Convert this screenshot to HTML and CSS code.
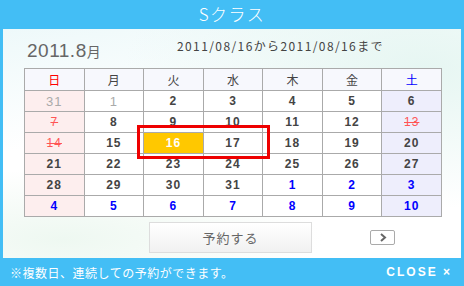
FILE: index.html
```html
<!DOCTYPE html>
<html lang="ja">
<head>
    <meta charset="UTF-8">
    <title>Sクラス</title>
    <link rel="stylesheet" href="styles.css">
</head>
<body>
    <div class="modal">
        <div class="modal-title">Sクラス</div>

        <div class="panel">
            <div class="top">
                <div class="month">2011.8<span class="month-unit">月</span></div>
                <div class="range">2011/08/16から2011/08/16まで</div>
            </div>

            <div class="cal-wrap">
                <table class="cal">
                    <thead>
                        <tr>
                            <th class="sun">日</th>
                            <th>月</th>
                            <th>火</th>
                            <th>水</th>
                            <th>木</th>
                            <th>金</th>
                            <th class="sat">土</th>
                        </tr>
                    </thead>
                    <tbody>
                        <tr>
                            <td class="sun-col other">31</td>
                            <td class="other">1</td>
                            <td>2</td>
                            <td>3</td>
                            <td>4</td>
                            <td>5</td>
                            <td class="sat-col">6</td>
                        </tr>
                        <tr>
                            <td class="sun-col closed">7</td>
                            <td>8</td>
                            <td>9</td>
                            <td>10</td>
                            <td>11</td>
                            <td>12</td>
                            <td class="sat-col closed">13</td>
                        </tr>
                        <tr>
                            <td class="sun-col closed">14</td>
                            <td>15</td>
                            <td class="picked">16</td>
                            <td>17</td>
                            <td>18</td>
                            <td>19</td>
                            <td class="sat-col">20</td>
                        </tr>
                        <tr>
                            <td class="sun-col">21</td>
                            <td>22</td>
                            <td>23</td>
                            <td>24</td>
                            <td>25</td>
                            <td>26</td>
                            <td class="sat-col">27</td>
                        </tr>
                        <tr>
                            <td class="sun-col">28</td>
                            <td>29</td>
                            <td>30</td>
                            <td>31</td>
                            <td class="next">1</td>
                            <td class="next">2</td>
                            <td class="sat-col next">3</td>
                        </tr>
                        <tr>
                            <td class="sun-col next">4</td>
                            <td class="next">5</td>
                            <td class="next">6</td>
                            <td class="next">7</td>
                            <td class="next">8</td>
                            <td class="next">9</td>
                            <td class="sat-col next">10</td>
                        </tr>
                    </tbody>
                </table>
                <!-- 選択範囲の枠 -->
                <div class="range-box"></div>
            </div>

            <div class="actions">
                <button class="btn-reserve">予約する</button>
                <button class="btn-next">
                    <svg width="8" height="9" viewBox="0 0 8 9"><path d="M2 1 L6 4.5 L2 8" fill="none" stroke="#666" stroke-width="2"/></svg>
                </button>
            </div>
        </div>

        <div class="modal-foot">
            <span class="note">※複数日、連続しての予約ができます。</span>
            <span class="close">CLOSE ×</span>
        </div>
    </div>
</body>
</html>
```

FILE: styles.css
```css
body { margin: 0; font-family: "Liberation Sans", "Noto Sans CJK JP", sans-serif; }

.modal { width: 464px; height: 286px; background: #43bef5; display: flex; flex-direction: column; }

.modal-title {
    height: 29px;
    line-height: 28px;
    text-align: center;
    color: #fff;
    font-family: "Noto Sans CJK JP", sans-serif;
    font-size: 17px;
    font-weight: 300;
    letter-spacing: 1.5px;
}

.panel {
    margin: 0 3px;
    height: 229px;
    padding: 0 0 0 21px;
    box-sizing: border-box;
    background:
        radial-gradient(ellipse 260px 70px at 60px 210px, #eef8f1 0%, rgba(255,255,255,0) 100%),
        radial-gradient(ellipse 300px 140px at 420px 40px, #e6f6f2 0%, rgba(255,255,255,0) 100%),
        linear-gradient(170deg, #eef9fa 0%, #ffffff 40%, #ffffff 100%);
}

.top { height: 39px; position: relative; }
.month {
    position: absolute;
    left: 3px;
    top: 11px;
    font-family: "Liberation Sans", sans-serif;
    font-size: 19px;
    color: #666;
    letter-spacing: 0.5px;
}
.month-unit { font-family: "Noto Sans CJK JP", sans-serif; font-size: 14px; }
.range {
    position: absolute;
    left: 153px;
    top: 8px;
    font-family: "Noto Sans CJK JP", sans-serif;
    font-size: 12px;
    color: #444;
    letter-spacing: 1.4px;
}

.cal-wrap { position: relative; width: 418px; }
.cal { width: 418px; table-layout: fixed; border-collapse: collapse; }
.cal th, .cal td { border: 1px solid #aaa; text-align: center; padding: 0; }
.cal th {
    height: 21px;
    background: #f7f8fd;
    font-family: "Noto Sans CJK JP", sans-serif;
    font-weight: normal;
    font-size: 12px;
    color: #444;
}
.cal td {
    height: 20px;
    font-size: 12px;
    font-weight: bold;
    color: #444;
    letter-spacing: 1px;
    background: #fff;
}
.cal th.sun { color: #f00; }
.cal th.sat { color: #00f; }
.cal td.sun-col { background: #fdeeee; }
.cal td.sat-col { background: #eeeefc; }
.cal td.other { color: #aaa; font-weight: normal; font-size: 13px; }
.cal td.closed { color: #f55; font-weight: normal; text-decoration: line-through; }
.cal td.next { color: #00f; }
.cal td.picked { background: #ffc800; color: #fff; }

.range-box {
    position: absolute;
    left: 113px;
    top: 57px;
    width: 127px;
    height: 28px;
    border: 3px solid #e00;
}

.actions { display: flex; align-items: center; padding: 5px 0 0 125px; }
.btn-reserve {
    width: 163px;
    height: 31px;
    border: 1px solid #ddd;
    background: linear-gradient(#fff, #f1f1f1);
    font-family: "Noto Sans CJK JP", sans-serif;
    font-size: 13px;
    color: #666;
    letter-spacing: 1px;
    padding: 0;
}
.btn-next {
    margin-left: 58px;
    width: 25px;
    height: 15px;
    border: 1px solid #aaa;
    border-radius: 2px;
    background: #fff;
    padding: 0;
    display: flex;
    align-items: center;
    justify-content: center;
}

.modal-foot {
    flex: 1;
    display: flex;
    align-items: center;
    justify-content: space-between;
    padding: 0 12px 0 10px;
    color: #fff;
}
.note { font-family: "Noto Sans CJK JP", sans-serif; font-size: 12px; letter-spacing: 0.5px; }
.close { font-size: 12px; font-weight: bold; letter-spacing: 2px; }
```
